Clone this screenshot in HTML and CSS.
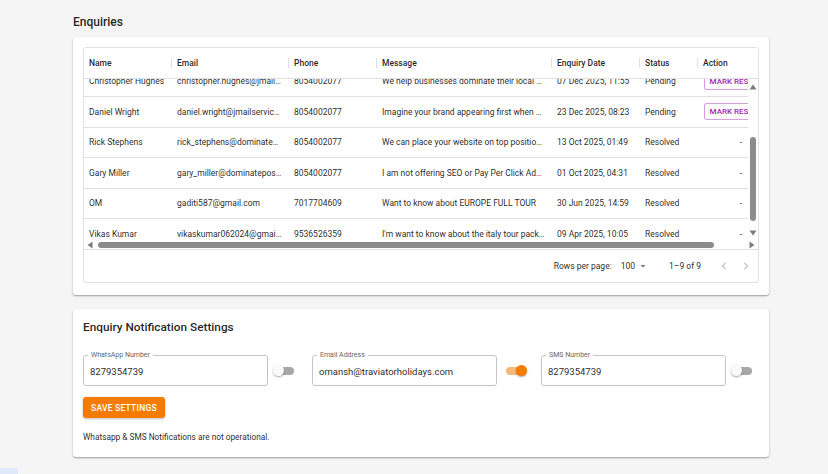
FILE: index.html
```html
<!DOCTYPE html>
<html lang="en">
<head>
    <meta charset="UTF-8">
    <meta name="viewport" content="width=device-width, initial-scale=1.0">
    <title>Enquiries</title>
    <link rel="stylesheet" href="styles.css">
</head>
<body>
    <div class="page">
        <h2 class="page-title">Enquiries</h2>
        <div class="card">
            <div class="grid">
                <div class="grid-head">
                    <div class="row head-row">
                        <div class="cell c-name">Name</div>
                        <div class="cell c-email">Email</div>
                        <div class="cell c-phone">Phone</div>
                        <div class="cell c-msg">Message</div>
                        <div class="cell c-date">Enquiry Date</div>
                        <div class="cell c-status">Status</div>
                        <div class="cell c-action">Action</div>
                    </div>
                </div>
                <div class="grid-body">
                    <div class="viewport" id="viewport">
                        <div class="row">
                            <div class="cell c-name">Sanjay Mehta</div>
                            <div class="cell c-email">sanjay.mehta1988@gmail.com</div>
                            <div class="cell c-phone">9812345670</div>
                            <div class="cell c-msg">Please share the details of the Dubai holiday package for 4 people</div>
                            <div class="cell c-date">28 Dec 2025, 18:12</div>
                            <div class="cell c-status">Pending</div>
                            <div class="cell c-action"><button class="mark-btn">Mark Resolved</button></div>
                        </div>
                        <div class="row">
                            <div class="cell c-name">Anna Roberts</div>
                            <div class="cell c-email">anna.roberts@jmailservices.com</div>
                            <div class="cell c-phone">8054002077</div>
                            <div class="cell c-msg">Get more customers with our local listing service</div>
                            <div class="cell c-date">19 Dec 2025, 09:40</div>
                            <div class="cell c-status">Pending</div>
                            <div class="cell c-action"><button class="mark-btn">Mark Resolved</button></div>
                        </div>
                        <div class="row">
                            <div class="cell c-name">Priya Sharma</div>
                            <div class="cell c-email">priyasharma.travel@gmail.com</div>
                            <div class="cell c-phone">9988776655</div>
                            <div class="cell c-msg">Looking for a Kerala honeymoon package in February</div>
                            <div class="cell c-date">11 Dec 2025, 16:27</div>
                            <div class="cell c-status">Pending</div>
                            <div class="cell c-action"><button class="mark-btn">Mark Resolved</button></div>
                        </div>
                        <div class="row">
                            <div class="cell c-name">Christopher Hughes</div>
                            <div class="cell c-email">christopher.hughes@jmailservices.com</div>
                            <div class="cell c-phone">8054002077</div>
                            <div class="cell c-msg">We help businesses dominate their local search results</div>
                            <div class="cell c-date">07 Dec 2025, 11:55</div>
                            <div class="cell c-status">Pending</div>
                            <div class="cell c-action"><button class="mark-btn">Mark Resolved</button></div>
                        </div>
                        <div class="row">
                            <div class="cell c-name">Daniel Wright</div>
                            <div class="cell c-email">daniel.wright@jmailservices.com</div>
                            <div class="cell c-phone">8054002077</div>
                            <div class="cell c-msg">Imagine your brand appearing first when customers search</div>
                            <div class="cell c-date">23 Dec 2025, 08:23</div>
                            <div class="cell c-status">Pending</div>
                            <div class="cell c-action"><button class="mark-btn">Mark Resolved</button></div>
                        </div>
                        <div class="row">
                            <div class="cell c-name">Rick Stephens</div>
                            <div class="cell c-email">rick_stephens@dominatebusiness.com</div>
                            <div class="cell c-phone">8054002077</div>
                            <div class="cell c-msg">We can place your website on top position of Google</div>
                            <div class="cell c-date">13 Oct 2025, 01:49</div>
                            <div class="cell c-status">Resolved</div>
                            <div class="cell c-action">-</div>
                        </div>
                        <div class="row">
                            <div class="cell c-name">Gary Miller</div>
                            <div class="cell c-email">gary_miller@dominatepositions.com</div>
                            <div class="cell c-phone">8054002077</div>
                            <div class="cell c-msg">I am not offering SEO or Pay Per Click Advertising</div>
                            <div class="cell c-date">01 Oct 2025, 04:31</div>
                            <div class="cell c-status">Resolved</div>
                            <div class="cell c-action">-</div>
                        </div>
                        <div class="row">
                            <div class="cell c-name">OM</div>
                            <div class="cell c-email">gaditi587@gmail.com</div>
                            <div class="cell c-phone">7017704609</div>
                            <div class="cell c-msg">Want to know about EUROPE FULL TOUR</div>
                            <div class="cell c-date">30 Jun 2025, 14:59</div>
                            <div class="cell c-status">Resolved</div>
                            <div class="cell c-action">-</div>
                        </div>
                        <div class="row">
                            <div class="cell c-name">Vikas Kumar</div>
                            <div class="cell c-email">vikaskumar062024@gmail.com</div>
                            <div class="cell c-phone">9536526359</div>
                            <div class="cell c-msg">I'm want to know about the italy tour package</div>
                            <div class="cell c-date">09 Apr 2025, 10:05</div>
                            <div class="cell c-status">Resolved</div>
                            <div class="cell c-action">-</div>
                        </div>
                    </div>
                    <div class="vbar">
                        <svg class="arrow" viewBox="0 0 8 6" width="8" height="6"><path d="M4 0.5L7.5 5.5H0.5z"/></svg>
                        <div class="vtrack"><div class="vthumb"></div></div>
                        <svg class="arrow" viewBox="0 0 8 6" width="8" height="6"><path d="M4 5.5L7.5 0.5H0.5z"/></svg>
                    </div>
                    <div class="hbar">
                        <svg class="arrow" viewBox="0 0 6 8" width="6" height="8"><path d="M0.5 4L5.5 0.5V7.5z"/></svg>
                        <div class="htrack"><div class="hthumb"></div></div>
                        <svg class="arrow" viewBox="0 0 6 8" width="6" height="8"><path d="M5.5 4L0.5 0.5V7.5z"/></svg>
                    </div>
                </div>
                <div class="grid-foot">
                    <span>Rows per page:</span>
                    <span class="per-page">100
                        <svg viewBox="0 0 24 24" width="12" height="12"><path d="M7 10l5 5 5-5z"/></svg>
                    </span>
                    <span class="range">1–9 of 9</span>
                    <span class="pager">
                        <svg viewBox="0 0 24 24" width="14" height="14"><path d="M15.41 16.59L10.83 12l4.58-4.59L14 6l-6 6 6 6 1.41-1.41z"/></svg>
                        <svg viewBox="0 0 24 24" width="14" height="14"><path d="M8.59 16.59L13.17 12 8.59 7.41 10 6l6 6-6 6-1.41-1.41z"/></svg>
                    </span>
                </div>
            </div>
        </div>

        <div class="card settings">
            <h3 class="settings-title">Enquiry Notification Settings</h3>
            <div class="fields">
                <div class="field-group">
                    <fieldset class="field">
                        <legend>WhatsApp Number</legend>
                        <input type="text" value="8279354739">
                    </fieldset>
                    <span class="switch"><span class="thumb"></span></span>
                </div>
                <div class="field-group">
                    <fieldset class="field">
                        <legend>Email Address</legend>
                        <input type="text" value="omansh@traviatorholidays.com">
                    </fieldset>
                    <span class="switch on"><span class="thumb"></span></span>
                </div>
                <div class="field-group">
                    <fieldset class="field">
                        <legend>SMS Number</legend>
                        <input type="text" value="8279354739">
                    </fieldset>
                    <span class="switch"><span class="thumb"></span></span>
                </div>
            </div>
            <button class="save-btn">Save Settings</button>
            <p class="note">Whatsapp &amp; SMS Notifications are not operational.</p>
        </div>
    </div>
    <div class="corner"></div>
    <script>
        // grid is shown scrolled down to the 4th enquiry
        document.getElementById('viewport').scrollTop = 104;
    </script>
</body>
</html>
```

FILE: styles.css
```css
* {
    box-sizing: border-box;
    margin: 0;
    padding: 0;
}

html,
body {
    overflow: hidden;
}

body {
    font-family: Roboto, 'Noto Sans', sans-serif;
    font-size: 8.5px;
    color: rgba(0, 0, 0, 0.87);
    background-color: #f5f5f5;
}

.page {
    width: 696px;
    margin-left: 73px;
    padding-top: 14px;
}

.page-title {
    font-size: 12px;
    font-weight: 500;
    line-height: 16px;
    margin-bottom: 7px;
}

.card {
    background-color: #fff;
    border-radius: 3px;
    padding: 10px 10px 12px;
    box-shadow: 0 1px 2px rgba(0, 0, 0, 0.18), 0 1px 1px rgba(0, 0, 0, 0.12), 0 1px 3px rgba(0, 0, 0, 0.1);
}

.card + .card {
    margin-top: 14px;
}

/* data grid */
.grid {
    border: 1px solid #e0e0e0;
    border-radius: 3px;
}

.grid-head {
    overflow: hidden;
    border-bottom: 1px solid #e0e0e0;
}

.row {
    display: flex;
    align-items: center;
    width: 701px;
    height: 30.5px;
    border-bottom: 1px solid #e0e0e0;
}

.head-row {
    height: 30px;
    border-bottom: none;
    font-weight: 500;
}

.head-row .cell + .cell {
    background: linear-gradient(#e0e0e0, #e0e0e0) no-repeat left center / 1px 14px;
}

.cell {
    flex: none;
    padding: 0 6px;
    white-space: nowrap;
    overflow: hidden;
    text-overflow: ellipsis;
}

.c-name {
    width: 87px;
    padding-left: 5px;
}
.c-email { width: 117px; }
.c-phone { width: 88px; }
.c-msg { width: 175px; }
.c-date { width: 88px; }
.c-status { width: 58px; }
.c-action {
    width: 88px;
    text-align: center;
    text-overflow: clip;
}

.head-row .c-action {
    text-align: left;
}

.grid-body {
    display: grid;
    grid-template-columns: 1fr 10px;
    grid-template-rows: 161px 9px;
}

.viewport {
    overflow: hidden;
}

.vbar {
    display: flex;
    flex-direction: column;
    align-items: center;
    padding: 5px 0 4px;
}

.vtrack {
    flex: 1;
    padding-top: 47px;
}

.vthumb {
    width: 6px;
    height: 84px;
    border-radius: 3px;
    background-color: #8c8c8c;
}

.hbar {
    grid-column: 1 / 3;
    display: flex;
    align-items: center;
    padding: 0 3px 0 3px;
}

.htrack {
    flex: 1;
    padding-left: 5px;
}

.hthumb {
    width: 616px;
    height: 6px;
    border-radius: 3px;
    background-color: #8c8c8c;
}

.arrow {
    flex: none;
    fill: #7d7d7d;
}

.mark-btn {
    height: 17px;
    padding: 0 5px;
    border: 1px solid rgba(156, 39, 176, 0.45);
    border-radius: 3px;
    background-color: #fff;
    color: #9c27b0;
    font-family: inherit;
    font-size: 8px;
    font-weight: 500;
    text-transform: uppercase;
    white-space: nowrap;
}

.grid-foot {
    display: flex;
    align-items: center;
    justify-content: flex-end;
    height: 33px;
    padding-right: 5px;
    border-top: 1px solid #e0e0e0;
}

.per-page {
    display: flex;
    align-items: center;
    gap: 2px;
    margin-left: 9px;
}

.per-page svg {
    fill: #757575;
}

.range {
    margin-left: 20px;
}

.pager {
    display: flex;
    gap: 8px;
    margin-left: 16px;
}

.pager svg {
    fill: #bdbdbd;
}

/* notification settings */
.settings {
    padding-bottom: 15px;
}

.settings-title {
    font-size: 11.8px;
    font-weight: 500;
    line-height: 16px;
    margin-bottom: 16px;
}

.fields {
    display: grid;
    grid-template-columns: 229px 229px 1fr;
}

.field-group {
    display: flex;
    align-items: center;
}

.field {
    width: 185px;
    padding: 0 6px 1px;
    border: 1px solid #c4c4c4;
    border-radius: 3px;
}

.field legend {
    margin-left: -2px;
    padding: 0 3px;
    font-size: 7px;
    line-height: 8px;
    color: #666;
}

.field input {
    display: block;
    width: 100%;
    height: 25px;
    border: none;
    outline: none;
    background: transparent;
    font-family: inherit;
    font-size: 9.5px;
    color: rgba(0, 0, 0, 0.87);
}

.switch {
    display: flex;
    align-items: center;
    width: 17px;
    height: 8px;
    margin: 4px 0 0 9px;
    border-radius: 4px;
    background-color: #a8a8a8;
}

.switch .thumb {
    flex: none;
    width: 11px;
    height: 11px;
    margin-left: -4px;
    border-radius: 50%;
    background-color: #fafafa;
    box-shadow: 0 1px 2px rgba(0, 0, 0, 0.35);
}

.switch.on {
    justify-content: flex-end;
    background-color: #f8b87a;
}

.switch.on .thumb {
    margin: 0 -4px 0 0;
    background-color: #f57c00;
}

.save-btn {
    display: block;
    height: 21px;
    margin-top: 11px;
    padding: 0 8px;
    border: none;
    border-radius: 3px;
    background-color: #f57c00;
    color: #fff;
    font-family: inherit;
    font-size: 8.5px;
    font-weight: 500;
    letter-spacing: 0.25px;
    text-transform: uppercase;
    box-shadow: 0 1px 3px rgba(0, 0, 0, 0.25);
}

.note {
    margin-top: 14px;
    font-size: 8.3px;
    line-height: 10px;
}

.corner {
    width: 18px;
    height: 6px;
    margin-top: 11px;
    background-color: #dfe9fb;
}
```
